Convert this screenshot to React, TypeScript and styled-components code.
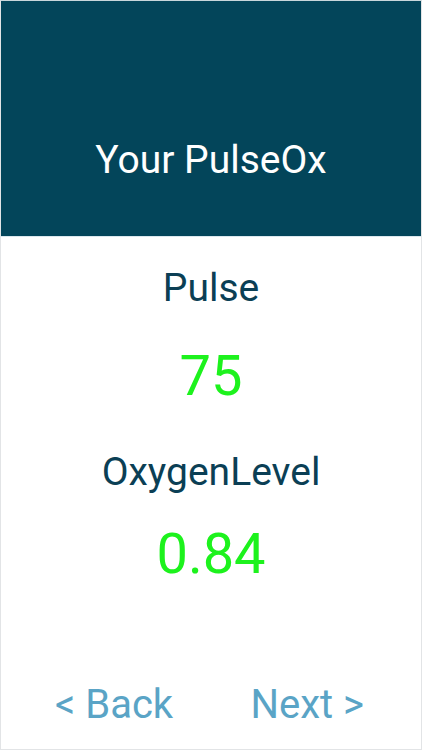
import React from "react";
import styled, { createGlobalStyle } from "styled-components";

const GlobalStyle = createGlobalStyle`
  html, body {
    margin: 0;
    padding: 0;
    background: #ffffff;
  }
  body {
    font-family: "Roboto", "Liberation Sans", sans-serif;
  }
`;

const Screen = styled.div`
  box-sizing: border-box;
  width: 422px;
  height: 750px;
  border: 1px solid #e2e4e6;
  border-top-color: #c9d6db;
  display: flex;
  flex-direction: column;
  background: #ffffff;
  overflow: hidden;
`;

const Header = styled.header`
  height: 236px;
  background: #03455a;
  display: flex;
  align-items: flex-start;
  justify-content: center;
  padding-top: 133px;
  box-sizing: border-box;
  border-bottom: 1px solid #dbe8ee;
`;

const Title = styled.h1`
  margin: 0;
  font-weight: 400;
  font-size: 39px;
  line-height: 52px;
  color: #ffffff;
`;

const Body = styled.main`
  flex: 1;
  display: flex;
  flex-direction: column;
  align-items: center;
  padding-top: 27px;
`;

const Label = styled.div<{ $gap: number }>`
  font-size: 39px;
  line-height: 48px;
  color: #0b3f55;
  margin-bottom: ${(p) => p.$gap}px;
`;

const Reading = styled.div<{ $gap: number }>`
  font-size: 56px;
  line-height: 64px;
  color: #1df21d;
  margin-bottom: ${(p) => p.$gap}px;
`;

const NavBar = styled.nav`
  display: flex;
  justify-content: space-between;
  padding: 0 57px 18px 54px;
`;

const NavButton = styled.button`
  border: none;
  background: none;
  padding: 0;
  font-family: inherit;
  font-size: 40px;
  line-height: 52px;
  color: #5aa4c6;
  cursor: pointer;
`;

const readings = [
  { label: "Pulse", value: "75", labelGap: 32, valueGap: 40 },
  { label: "OxygenLevel", value: "0.84", labelGap: 26, valueGap: 0 },
];

export default function App() {
  return (
    <>
      <GlobalStyle />
      <Screen>
        <Header>
          <Title>Your PulseOx</Title>
        </Header>
        <Body>
          {readings.map((r) => (
            <React.Fragment key={r.label}>
              <Label $gap={r.labelGap}>{r.label}</Label>
              <Reading $gap={r.valueGap}>{r.value}</Reading>
            </React.Fragment>
          ))}
        </Body>
        <NavBar>
          <NavButton>&lt; Back</NavButton>
          <NavButton>Next &gt;</NavButton>
        </NavBar>
      </Screen>
    </>
  );
}
